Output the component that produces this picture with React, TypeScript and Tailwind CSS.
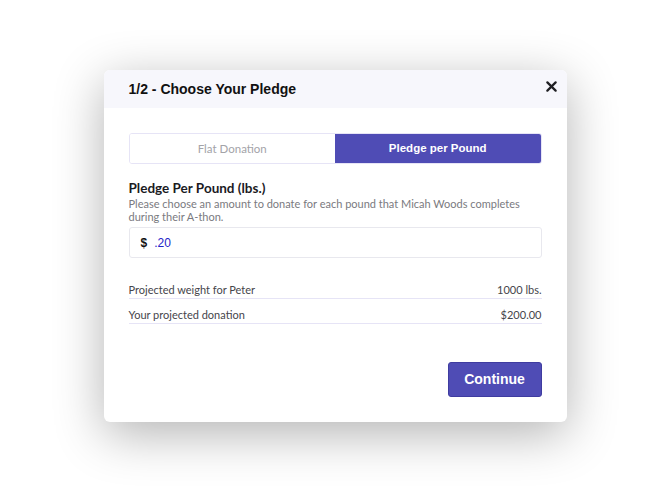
import * as React from 'react';

const BODY_FONT = { fontFamily: 'Lato, "Noto Sans", sans-serif' };
const HEAD_FONT = { fontFamily: '"Liberation Sans", Arial, sans-serif' };

function CloseIcon() {
  return (
    <svg width="11" height="11" viewBox="0 0 12 12" fill="none">
      <path d="M1.5 1.5l9 9M10.5 1.5l-9 9" stroke="#1f1f23" strokeWidth="2.4" strokeLinecap="round" />
    </svg>
  );
}

export default function App() {
  const [mode, setMode] = React.useState<'flat' | 'pound'>('pound');

  return (
    <div className="flex h-screen w-full items-center justify-center bg-white pt-[2px]" style={BODY_FONT}>
      <div className="flex h-[352px] w-[463px] flex-col overflow-hidden rounded-md bg-white shadow-[0_12px_50px_rgba(0,0,0,0.3)]">
        <div className="flex h-[38px] shrink-0 items-center justify-between bg-[#f7f7fc] pl-[25px] pr-[6px]">
          <h2 className="mt-[1px] text-[14px] font-bold text-[#111]" style={HEAD_FONT}>
            1/2 - Choose Your Pledge
          </h2>
          <button type="button" className="-mt-[5px] p-1">
            <CloseIcon />
          </button>
        </div>

        <div className="flex flex-1 flex-col px-[25px] pt-[25px] pb-[25px]">
          <div className="flex h-[31px] overflow-hidden rounded-[3px] border border-[#e6e4f6]">
            <button
              type="button"
              onClick={() => setMode('flat')}
              className={`flex-1 text-[11.5px] ${mode === 'flat' ? 'bg-[#4f4cb5] font-bold text-white' : 'bg-white text-[#a3a3a8]'}`}
              style={mode === 'flat' ? HEAD_FONT : BODY_FONT}
            >
              Flat Donation
            </button>
            <button
              type="button"
              onClick={() => setMode('pound')}
              className={`flex-1 text-[11.5px] ${mode === 'pound' ? 'bg-[#4f4cb5] font-bold text-white' : 'bg-white text-[#a3a3a8]'}`}
              style={mode === 'pound' ? HEAD_FONT : BODY_FONT}
            >
              Pledge per Pound
            </button>
          </div>

          <h3 className="mt-[16px] text-[13.5px] font-bold leading-[16px] text-[#1b1b1f]">Pledge Per Pound (lbs.)</h3>
          <p className="mt-[2px] text-[11px] leading-[12.5px] text-[#7a7a80]">
            Please choose an amount to donate for each pound that Micah Woods completes
            <br />
            during their A-thon.
          </p>

          <div className="mt-[4px] flex h-[31px] items-center rounded-[3px] border border-[#e8e8ee] px-[11px]">
            <span className="text-[12px] font-bold text-[#111]" style={HEAD_FONT}>$</span>
            <span className="ml-[7px] text-[12px] text-[#2323c8]" style={HEAD_FONT}>.20</span>
          </div>

          <div className="mt-[26px] flex items-end justify-between border-b border-[#e6e4f6] pb-[2px] text-[11px] leading-[12px] text-[#45454b]">
            <span>Projected weight for Peter</span>
            <span>1000 lbs.</span>
          </div>
          <div className="mt-[10px] flex items-end justify-between border-b border-[#e6e4f6] pb-[2px] text-[11px] leading-[12px] text-[#45454b]">
            <span>Your projected donation</span>
            <span>$200.00</span>
          </div>

          <div className="mt-auto flex justify-end">
            <button
              type="button"
              className="h-[35px] w-[94px] rounded-[3px] border border-[#3f3ca0] bg-[#4f4cb5] text-[14px] font-bold text-white"
              style={HEAD_FONT}
            >
              Continue
            </button>
          </div>
        </div>
      </div>
    </div>
  );
}
